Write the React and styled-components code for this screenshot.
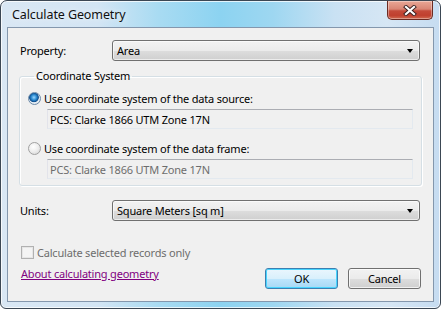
import React from "react";
import styled, { createGlobalStyle } from "styled-components";

const Global = createGlobalStyle`
  html, body { margin: 0; padding: 0; background: #ffffff; }
  body { font-family: "Noto Sans", "Open Sans", sans-serif; }
  * { box-sizing: border-box; }
`;

const Window = styled.div`
  position: relative;
  width: 441px;
  height: 309px;
  border: 1px solid #3b4754;
  border-radius: 7px 7px 6px 6px;
  background:
    linear-gradient(90deg, #d9e7f4 0%, #d3e5f4 22%, #a8dbf2 36%, #8cd3f1 50%, #9ed7f1 62%, #c9e1f3 76%, #d6e6f4 88%, #c6dcf1 100%);
  box-shadow: inset 0 0 0 1px rgba(255,255,255,0.75);
  display: flex;
  flex-direction: column;
  overflow: hidden;
  font-family: "Noto Sans", "Open Sans", sans-serif;
  font-size: 11px;
  letter-spacing: -0.2px;
  color: #000;
`;

const TitleBar = styled.div`
  height: 28px;
  display: flex;
  justify-content: space-between;
  align-items: flex-start;
  padding: 0 7px 0 11px;
`;

const Title = styled.div`
  font-size: 12.5px;
  letter-spacing: -0.1px;
  line-height: 1;
  padding-top: 8px;
  color: #101010;
  text-shadow: 0 0 6px rgba(255,255,255,0.9);
`;

const CloseButton = styled.div`
  width: 46px;
  height: 19px;
  border: 1px solid #6b2b22;
  border-top: none;
  border-radius: 0 0 5px 5px;
  background: linear-gradient(180deg, #e9a796 0%, #d88574 45%, #c44a39 55%, #c0402e 80%, #d06a50 100%);
  box-shadow: inset 0 0 0 1px rgba(255,255,255,0.35);
  display: flex;
  align-items: center;
  justify-content: center;
`;

const Content = styled.div`
  flex: 1;
  margin: 0 6px 6px 6px;
  border: 1px solid #8497ad;
  background: #f0f0f0;
  padding: 12px 11px 12px 11px;
  display: flex;
  flex-direction: column;
`;

const FieldRow = styled.div`
  display: flex;
  align-items: center;
  padding: 0 1px;
  height: 21px;
  margin-top: ${(p) => p.$mt || 0}px;
`;

const Label = styled.div`
  width: 92px;
`;

const Combo = styled.div`
  width: 308px;
  height: 21px;
  border: 1px solid #707070;
  border-radius: 3px;
  background: linear-gradient(180deg, #f2f2f2 0%, #ebebeb 50%, #dddddd 51%, #cfcfcf 100%);
  box-shadow: inset 0 0 0 1px rgba(255,255,255,0.6);
  display: flex;
  align-items: center;
  justify-content: space-between;
  padding: 0 6px 0 4px;
`;

const Arrow = styled.span`
  width: 0;
  height: 0;
  border-left: 3.5px solid transparent;
  border-right: 3.5px solid transparent;
  border-top: 4px solid #000;
  margin-top: 1px;
`;

const Group = styled.fieldset`
  margin: 8px 0 0 0;
  border: 1px solid #d5dfe5;
  border-radius: 3px;
  box-shadow: inset 1px 1px 0 #fff, 1px 1px 0 #fff;
  padding: 4px 7px 8px 8px;
  height: 117px;
`;

const Legend = styled.legend`
  padding: 0 2px;
  margin-left: 6px;
  line-height: 14px;
`;

const RadioRow = styled.div`
  display: flex;
  align-items: center;
  gap: 3px;
  height: 15px;
  margin-top: ${(p) => p.$mt || 0}px;
  color: #000;
`;

const Radio = styled.span`
  width: 13px;
  height: 13px;
  border-radius: 50%;
  border: 1px solid ${(p) => (p.$checked ? "#6c8aa8" : "#a0a0a0")};
  background: ${(p) =>
    p.$checked
      ? "radial-gradient(circle at 45% 40%, #9bd8ff 0%, #2b8ad1 30%, #0f4d8c 50%, #e6eef5 58%, #dcdcdc 100%)"
      : "radial-gradient(circle at 40% 35%, #ffffff 0%, #ededed 50%, #cfcfcf 100%)"};
  flex: none;
`;

const TextBox = styled.div`
  width: 366px;
  height: 20px;
  margin: ${(p) => p.$mt || 0}px 0 0 19px;
  border: 1px solid;
  border-color: #abadb3 #e3e9ef #e3e9ef #e2e3ea;
  display: flex;
  align-items: center;
  padding-left: 2px;
  color: ${(p) => (p.$disabled ? "#6d6d6d" : "#000")};
`;

const CheckRow = styled.div`
  display: flex;
  align-items: center;
  gap: 3px;
  margin-top: 24px;
  padding-left: 2px;
  color: #6d6d6d;
  height: 14px;
`;

const Check = styled.span`
  width: 13px;
  height: 13px;
  border: 1px solid #b1b1b1;
  background: #f4f4f4;
  box-shadow: inset 0 0 0 1px #e6e6e6;
`;

const Footer = styled.div`
  display: flex;
  align-items: center;
  justify-content: space-between;
  margin-top: 9px;
  padding-left: 2px;
  padding-right: 1px;
`;

const Link = styled.a`
  color: #800080;
  text-decoration: underline;
  margin-top: -10px;
`;

const Buttons = styled.div`
  display: flex;
  gap: 10px;
`;

const Button = styled.div`
  width: 73px;
  height: 21px;
  border: 1px solid ${(p) => (p.$default ? "#3c7fb1" : "#707070")};
  border-radius: 3px;
  background: ${(p) =>
    p.$default
      ? "linear-gradient(180deg, #eaf6fd 0%, #d9f0fc 50%, #bee6fd 51%, #a7d9f5 100%)"
      : "linear-gradient(180deg, #f2f2f2 0%, #ebebeb 50%, #dddddd 51%, #cfcfcf 100%)"};
  box-shadow: inset 0 0 0 1px ${(p) => (p.$default ? "#48d5fe" : "rgba(255,255,255,0.7)")};
  display: flex;
  align-items: center;
  justify-content: center;
`;

export default function App() {
  return (
    <>
      <Global />
      <Window>
        <TitleBar>
          <Title>Calculate Geometry</Title>
          <CloseButton>
            <svg width="14" height="11" viewBox="0 0 14 11">
              <path d="M3 2 L11 9 M11 2 L3 9" stroke="#3a2020" strokeWidth="4" strokeLinecap="square" />
              <path d="M3 2 L11 9 M11 2 L3 9" stroke="#ffffff" strokeWidth="2.2" strokeLinecap="square" />
            </svg>
          </CloseButton>
        </TitleBar>
        <Content>
          <FieldRow>
            <Label>Property:</Label>
            <Combo>
              <span>Area</span>
              <Arrow />
            </Combo>
          </FieldRow>
          <Group>
            <Legend>Coordinate System</Legend>
            <RadioRow $mt={4}>
              <Radio $checked />
              <span>Use coordinate system of the data source:</span>
            </RadioRow>
            <TextBox $mt={3}>PCS: Clarke 1866 UTM Zone 17N</TextBox>
            <RadioRow $mt={12}>
              <Radio />
              <span>Use coordinate system of the data frame:</span>
            </RadioRow>
            <TextBox $mt={3} $disabled>PCS: Clarke 1866 UTM Zone 17N</TextBox>
          </Group>
          <FieldRow $mt={14}>
            <Label>Units:</Label>
            <Combo>
              <span>Square Meters [sq m]</span>
              <Arrow />
            </Combo>
          </FieldRow>
          <CheckRow>
            <Check />
            <span>Calculate selected records only</span>
          </CheckRow>
          <Footer>
            <Link>About calculating geometry</Link>
            <Buttons>
              <Button $default>OK</Button>
              <Button>Cancel</Button>
            </Buttons>
          </Footer>
        </Content>
      </Window>
    </>
  );
}
